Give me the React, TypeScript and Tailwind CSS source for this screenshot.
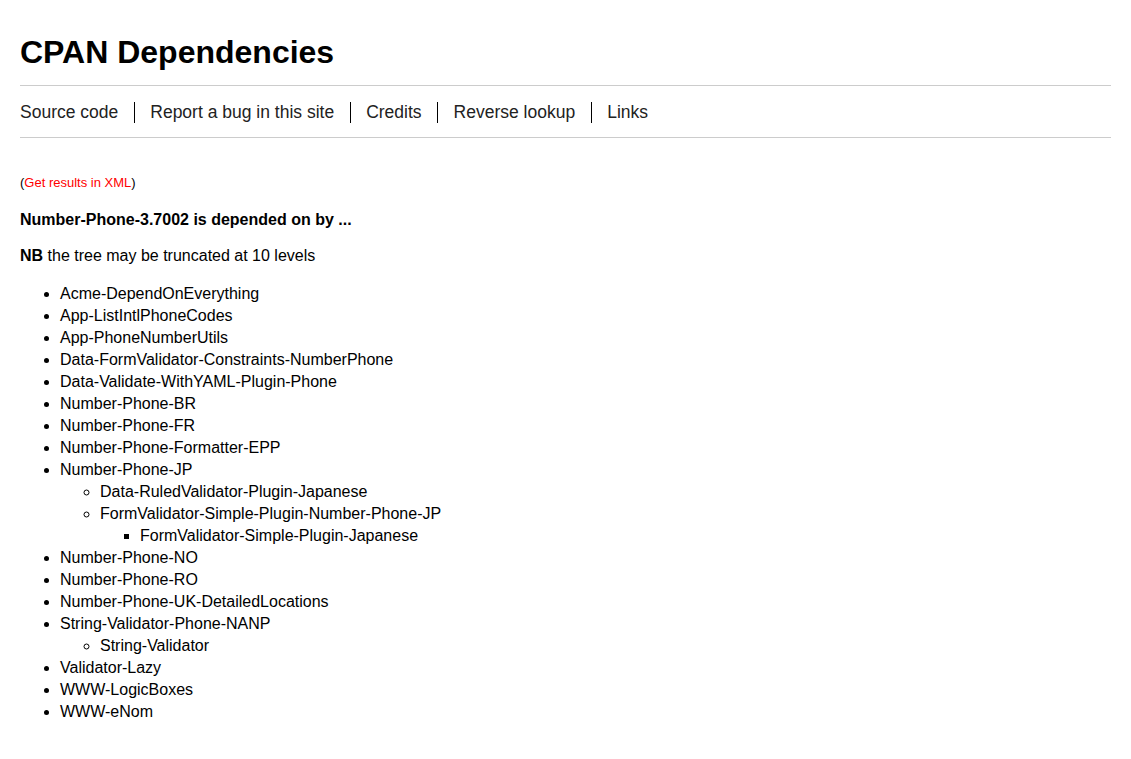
import React from "react";

type Node = { name: string; children?: Node[] };

const tree: Node[] = [
  { name: "Acme-DependOnEverything" },
  { name: "App-ListIntlPhoneCodes" },
  { name: "App-PhoneNumberUtils" },
  { name: "Data-FormValidator-Constraints-NumberPhone" },
  { name: "Data-Validate-WithYAML-Plugin-Phone" },
  { name: "Number-Phone-BR" },
  { name: "Number-Phone-FR" },
  { name: "Number-Phone-Formatter-EPP" },
  {
    name: "Number-Phone-JP",
    children: [
      { name: "Data-RuledValidator-Plugin-Japanese" },
      {
        name: "FormValidator-Simple-Plugin-Number-Phone-JP",
        children: [{ name: "FormValidator-Simple-Plugin-Japanese" }],
      },
    ],
  },
  { name: "Number-Phone-NO" },
  { name: "Number-Phone-RO" },
  { name: "Number-Phone-UK-DetailedLocations" },
  {
    name: "String-Validator-Phone-NANP",
    children: [{ name: "String-Validator" }],
  },
  { name: "Validator-Lazy" },
  { name: "WWW-LogicBoxes" },
  { name: "WWW-eNom" },
];

function Tree({ nodes, depth }: { nodes: Node[]; depth: number }) {
  const cls = depth === 0 ? "list-disc" : depth === 1 ? "list-[circle]" : "list-[square]";
  return (
    <ul className={`${cls} pl-10`}>
      {nodes.map((n) => (
        <li key={n.name} className="leading-[22px]">
          {n.name}
          {n.children && <Tree nodes={n.children} depth={depth + 1} />}
        </li>
      ))}
    </ul>
  );
}

export default function App() {
  const links = ["Source code", "Report a bug in this site", "Credits", "Reverse lookup", "Links"];
  return (
    <div className="min-h-[759px] bg-white px-5 pt-[30px] text-black font-['Liberation_Sans',Arial,sans-serif]">
      <h1 className="text-[32px] font-bold leading-[44px]">CPAN Dependencies</h1>
      <div className="mt-[11px] border-t border-b border-[#cccccc] pt-[16px] pb-[14px]">
        <div className="flex items-center text-[17.5px] leading-[21px] text-[#222222]">
          {links.map((l, i) => (
            <span
              key={l}
              className={`${i === 0 ? "pl-0" : "pl-[15.5px]"} ${i < links.length - 1 ? "pr-[15.5px] border-r border-black" : ""}`}
            >
              {l}
            </span>
          ))}
        </div>
      </div>
      <p className="mt-[37px] text-[13px] leading-[15px]">
        (<span className="text-[#ff0000]">Get results in XML</span>)
      </p>
      <p className="mt-[21px] text-[16px] font-bold leading-[18px]">Number-Phone-3.7002 is depended on by ...</p>
      <p className="mt-[18px] text-[16px] leading-[18px]">
        <b>NB</b> the tree may be truncated at 10 levels
      </p>
      <div className="mt-[18px] text-[16px]">
        <Tree nodes={tree} depth={0} />
      </div>
    </div>
  );
}
